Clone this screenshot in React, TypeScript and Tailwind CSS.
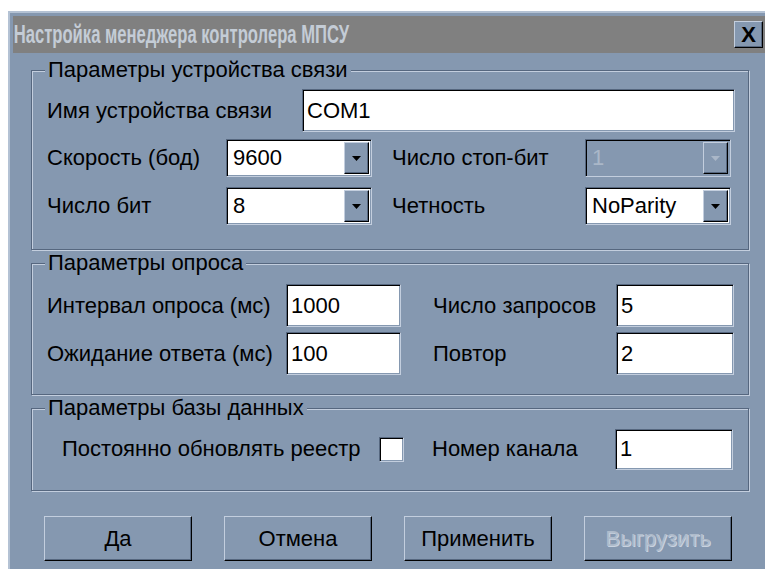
import React from "react";

const FACE = "bg-[#8598b0]";

function Sunken({ children, className = "", white = true }: { children?: React.ReactNode; className?: string; white?: boolean }) {
  return (
    <div
      className={`border border-t-[#56677f] border-l-[#56677f] border-r-[#c3cede] border-b-[#c3cede] shadow-[inset_1px_1px_0_#000,inset_-1px_-1px_0_#8598b0] ${white ? "bg-white" : FACE} ${className}`}
    >
      {children}
    </div>
  );
}

function TextBox({ value, className = "" }: { value: string; className?: string }) {
  return (
    <Sunken className={`flex items-center pl-[4px] ${className}`}>
      <span className="text-[22px] leading-none text-black">{value}</span>
    </Sunken>
  );
}

function Arrow({ disabled = false }: { disabled?: boolean }) {
  return (
    <svg width="9" height="5" viewBox="0 0 9 5">
      <path d="M0 0h9L4.5 5z" fill={disabled ? "#aab7c8" : "#000"} />
    </svg>
  );
}

function Combo({ value, disabled = false }: { value: string; disabled?: boolean }) {
  return (
    <Sunken white={!disabled} className="flex h-[38px] w-[146px] items-stretch p-[2px]">
      <div className="flex flex-1 items-center pl-[4px]">
        <span className={`text-[22px] leading-none ${disabled ? "text-[#aab7c8]" : "text-black"}`}>{value}</span>
      </div>
      <div className="flex w-[25px] items-center justify-center border border-t-[#c3cede] border-l-[#c3cede] border-r-black border-b-black bg-[#8598b0] shadow-[inset_-1px_-1px_0_#56677f]">
        <Arrow disabled={disabled} />
      </div>
    </Sunken>
  );
}

function Group({ title, className = "", children }: { title: string; className?: string; children: React.ReactNode }) {
  return (
    <div
      className={`relative border border-[#56677f] shadow-[inset_1px_1px_0_#c3cede,1px_1px_0_#c3cede] ${className}`}
    >
      <div className="absolute left-[13px] top-[-12px] bg-[#8598b0] px-[3px] text-[22px] leading-[22px] text-black">
        {title}
      </div>
      {children}
    </div>
  );
}

function Label({ children, className = "" }: { children: React.ReactNode; className?: string }) {
  return <span className={`text-[22px] leading-none text-black whitespace-nowrap ${className}`}>{children}</span>;
}

function Button({ children, disabled = false }: { children: React.ReactNode; disabled?: boolean }) {
  return (
    <div className="flex h-[45px] w-[148px] items-center justify-center border border-t-[#c3cede] border-l-[#c3cede] border-r-black border-b-black bg-[#8598b0] shadow-[inset_-1px_-1px_0_#56677f]">
      <span
        className={`text-[22px] leading-none ${disabled ? "text-[#aebbcb] [text-shadow:1px_1px_0_#c9d3e0]" : "text-black"}`}
      >
        {children}
      </span>
    </div>
  );
}

export default function App() {
  return (
    <div className="h-[569px] w-[765px] overflow-hidden bg-white font-['Liberation_Sans',Arial,sans-serif]">
      <div className="ml-[8px] mt-[11px] h-[570px] w-[770px] border-l-2 border-t-2 border-[#b4c2d4] bg-[#8598b0] pl-[3px] pt-[3px]">
        {/* caption bar */}
        <div className="flex h-[37px] w-[752px] items-center justify-between bg-[#808080] pr-[2px]">
          <span className="origin-left scale-x-[0.665] whitespace-nowrap pl-[1px] text-[25px] font-bold leading-none text-[#c4ccd6]">
            Настройка менеджера контролера МПСУ
          </span>
          <div className="flex h-[27px] w-[29px] items-center justify-center border border-t-[#c3cede] border-l-[#c3cede] border-r-black border-b-black bg-[#8598b0] shadow-[inset_-1px_-1px_0_#56677f]">
            <span className="text-[22px] font-bold leading-none text-black">X</span>
          </div>
        </div>

        {/* dialog body */}
        <div className="flex w-[719px] flex-col pl-[18px] pt-[17px]">
          <Group title="Параметры устройства связи" className="h-[180px] w-[718px]">
            <div className="flex flex-col pl-[15px] pt-[18px]">
              <div className="flex h-[43px] items-center">
                <Label className="w-[255px]">Имя устройства связи</Label>
                <TextBox value="COM1" className="h-[43px] w-[433px]" />
              </div>
              <div className="mt-[7px] flex h-[38px] items-center">
                <Label className="w-[179px]">Скорость (бод)</Label>
                <Combo value="9600" />
                <Label className="ml-[20px] w-[193px]">Число стоп-бит</Label>
                <Combo value="1" disabled />
              </div>
              <div className="mt-[10px] flex h-[38px] items-center">
                <Label className="w-[179px]">Число бит</Label>
                <Combo value="8" />
                <Label className="ml-[20px] w-[193px]">Четность</Label>
                <Combo value="NoParity" />
              </div>
            </div>
          </Group>

          <Group title="Параметры опроса" className="mt-[13px] h-[132px] w-[718px]">
            <div className="flex flex-col pl-[15px] pt-[20px]">
              <div className="flex h-[43px] items-center">
                <Label className="w-[239px]">Интервал опроса (мс)</Label>
                <TextBox value="1000" className="h-[43px] w-[115px]" />
                <Label className="ml-[32px] w-[183px]">Число запросов</Label>
                <TextBox value="5" className="h-[43px] w-[118px]" />
              </div>
              <div className="mt-[5px] flex h-[43px] items-center">
                <Label className="w-[239px]">Ожидание ответа (мс)</Label>
                <TextBox value="100" className="h-[43px] w-[115px]" />
                <Label className="ml-[32px] w-[183px]">Повтор</Label>
                <TextBox value="2" className="h-[43px] w-[118px]" />
              </div>
            </div>
          </Group>

          <Group title="Параметры базы данных" className="mt-[13px] h-[83px] w-[718px]">
            <div className="mt-[20px] flex h-[40px] items-center pl-[30px]">
              <Label className="w-[317px]">Постоянно обновлять реестр</Label>
              <Sunken className="h-[25px] w-[25px]" />
              <Label className="ml-[28px] w-[183px]">Номер канала</Label>
              <TextBox value="1" className="h-[41px] w-[118px]" />
            </div>
          </Group>

          <div className="mt-[25px] flex gap-[32px] pl-[13px]">
            <Button>Да</Button>
            <Button>Отмена</Button>
            <Button>Применить</Button>
            <Button disabled>Выгрузить</Button>
          </div>
        </div>
      </div>
    </div>
  );
}
